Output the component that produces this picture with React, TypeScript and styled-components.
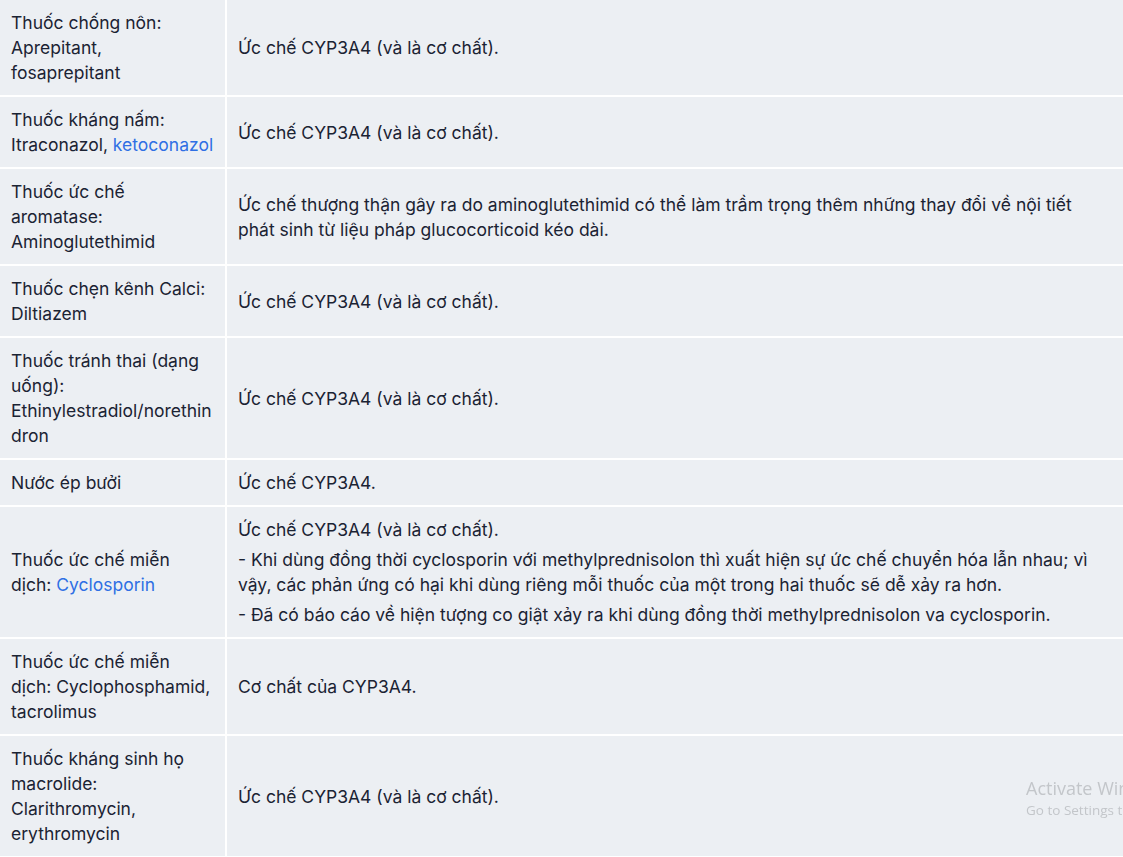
import React from "react";
import styled, { createGlobalStyle } from "styled-components";

const Global = createGlobalStyle`
  html, body { margin: 0; padding: 0; background: #ffffff; }
  body { font-family: Inter, "Noto Sans", sans-serif; overflow: hidden; }
`;

const Table = styled.div`
  display: grid;
  grid-template-columns: 225px 1fr;
  gap: 2px;
  width: 1123px;
  background: #ffffff;
`;

const Cell = styled.div`
  background: #eceff3;
  color: #1b2333;
  font-size: 17.5px;
  line-height: 25px;
  padding: 10px 11px;
  display: flex;
  flex-direction: column;
  justify-content: center;
  gap: 5px;
  overflow-wrap: anywhere;
  word-break: break-word;
`;

const Para = styled.p`
  margin: 0;
`;

const Link = styled.a`
  color: #2f6fe4;
  text-decoration: none;
`;

const Watermark = styled.div`
  position: fixed;
  left: 1026px;
  top: 776px;
  font-family: "Open Sans", "Noto Sans", sans-serif;
  color: #c3c6ca;
  white-space: nowrap;
  pointer-events: none;
`;

const WmTitle = styled.div`
  font-size: 18px;
  line-height: 24px;
`;

const WmSub = styled.div`
  font-size: 13.5px;
  line-height: 20px;
`;

type Row = { name: React.ReactNode; desc: React.ReactNode[] };

const rows: Row[] = [
  { name: "Thuốc chống nôn: Aprepitant, fosaprepitant", desc: ["Ức chế CYP3A4 (và là cơ chất)."] },
  {
    name: (
      <>
        Thuốc kháng nấm: Itraconazol, <Link href="#">ketoconazol</Link>
      </>
    ),
    desc: ["Ức chế CYP3A4 (và là cơ chất)."],
  },
  {
    name: "Thuốc ức chế aromatase: Aminoglutethimid",
    desc: [
      "Ức chế thượng thận gây ra do aminoglutethimid có thể làm trầm trọng thêm những thay đổi về nội tiết phát sinh từ liệu pháp glucocorticoid kéo dài.",
    ],
  },
  { name: "Thuốc chẹn kênh Calci: Diltiazem", desc: ["Ức chế CYP3A4 (và là cơ chất)."] },
  {
    name: "Thuốc tránh thai (dạng uống): Ethinylestradiol/norethindron",
    desc: ["Ức chế CYP3A4 (và là cơ chất)."],
  },
  { name: "Nước ép bưởi", desc: ["Ức chế CYP3A4."] },
  {
    name: (
      <>
        Thuốc ức chế miễn dịch: <Link href="#">Cyclosporin</Link>
      </>
    ),
    desc: [
      "Ức chế CYP3A4 (và là cơ chất).",
      "- Khi dùng đồng thời cyclosporin với methylprednisolon thì xuất hiện sự ức chế chuyển hóa lẫn nhau; vì vậy, các phản ứng có hại khi dùng riêng mỗi thuốc của một trong hai thuốc sẽ dễ xảy ra hơn.",
      "- Đã có báo cáo về hiện tượng co giật xảy ra khi dùng đồng thời methylprednisolon va cyclosporin.",
    ],
  },
  {
    name: "Thuốc ức chế miễn dịch: Cyclophosphamid, tacrolimus",
    desc: ["Cơ chất của CYP3A4."],
  },
  {
    name: "Thuốc kháng sinh họ macrolide: Clarithromycin, erythromycin",
    desc: ["Ức chế CYP3A4 (và là cơ chất)."],
  },
];

export default function App() {
  return (
    <>
      <Global />
      <Table>
        {rows.map((r, i) => (
          <React.Fragment key={i}>
            <Cell>
              <Para>{r.name}</Para>
            </Cell>
            <Cell>
              {r.desc.map((d, j) => (
                <Para key={j}>{d}</Para>
              ))}
            </Cell>
          </React.Fragment>
        ))}
      </Table>
      <Watermark>
        <WmTitle>Activate Windows</WmTitle>
        <WmSub>Go to Settings to activate Windows.</WmSub>
      </Watermark>
    </>
  );
}
